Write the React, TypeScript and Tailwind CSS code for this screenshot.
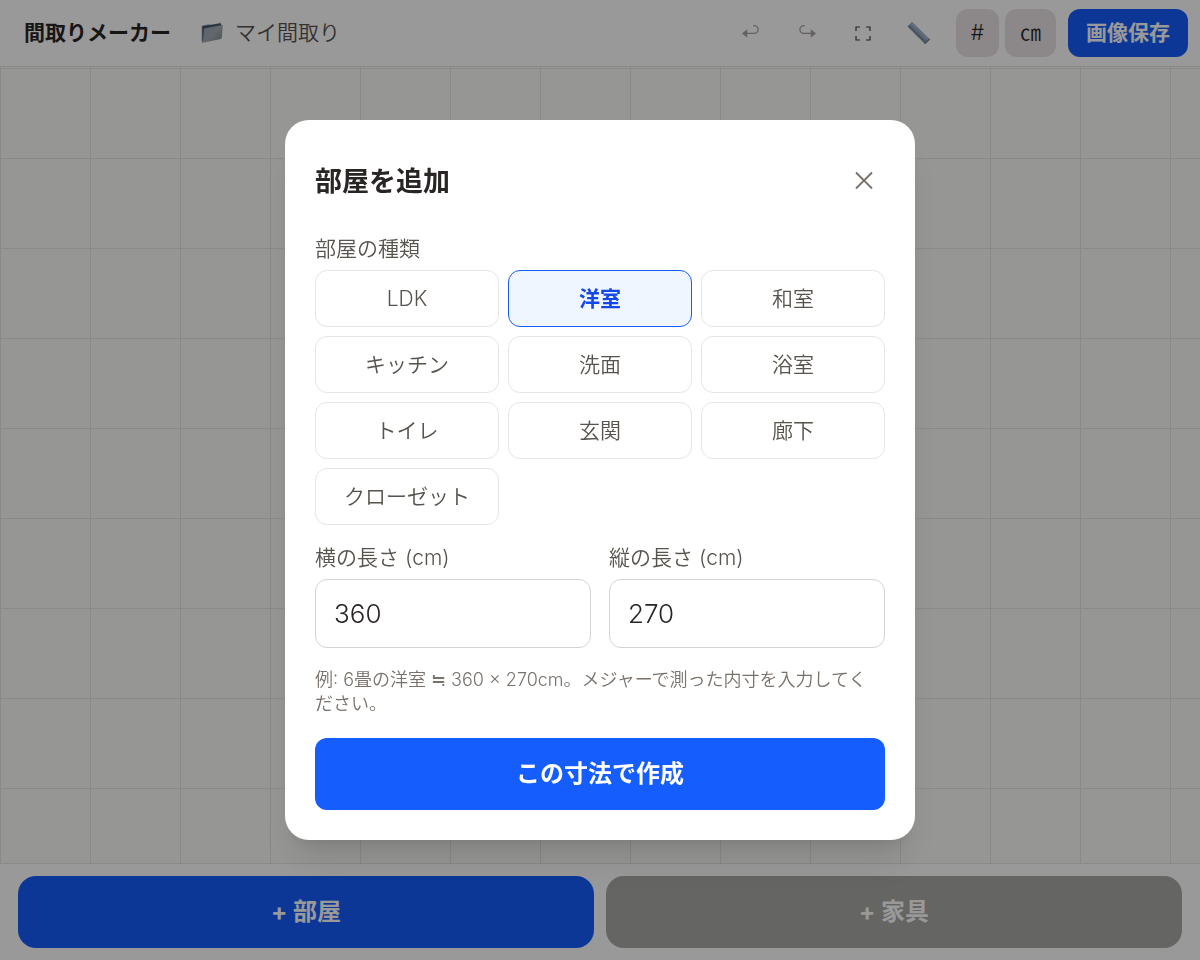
import { useState } from 'react';

const ROOM_TYPES = ['LDK', '洋室', '和室', 'キッチン', '洗面', '浴室', 'トイレ', '玄関', '廊下', 'クローゼット'];

function FolderIcon() {
  return (
    <svg viewBox="0 0 24 24" className="h-6 w-6 shrink-0" aria-hidden>
      <defs>
        <linearGradient id="folder-front" x1="0" y1="0" x2="1" y2="1">
          <stop offset="0" stopColor="#98a5b0" />
          <stop offset="0.5" stopColor="#a4adb6" />
          <stop offset="1" stopColor="#7d8994" />
        </linearGradient>
      </defs>
      <path d="M1.4 4.4 8.4 3l1.2.9L19.6 1.6l1 1.6-17.8 5z" fill="#a9c0d0" />
      <path d="M1.2 5 19.8 2.6l.6 2L3 20.5l-1.6-.4z" fill="#3f5666" />
      <path d="M3.8 7.2 20.9 4c.6-.1.9.2.9.8l-1 11.8c-.1.7-.4 1.1-1 1.3L3 21.4c-.7.1-1-.2-.9-.9l.8-12.2c0-.6.3-1 .9-1.1z" fill="url(#folder-front)" />
      <path d="M1.3 5v15.6c0 .6.4.9 1 .8" fill="none" stroke="#5c7282" strokeWidth="0.9" />
    </svg>
  );
}

function UndoIcon({ flipped = false }: { flipped?: boolean }) {
  return (
    <svg viewBox="0 0 20 20" className={`h-5 w-5 ${flipped ? '-scale-x-100' : ''}`} aria-hidden>
      <path d="M5 10.4h8.2a3.9 3.9 0 0 0 0-7.8h-1" fill="none" stroke="currentColor" strokeWidth="1.3" />
      <path d="M1 10.4 6.2 6.2v8.4z" fill="currentColor" />
    </svg>
  );
}

function FitIcon() {
  return (
    <svg viewBox="0 0 16 16" className="h-4 w-4" fill="none" stroke="currentColor" strokeWidth="1.2" aria-hidden>
      <path d="M1 6V2h4M11 2h4v4M15 11v4h-4M5 15H1v-4" />
    </svg>
  );
}

function RulerIcon() {
  return (
    <svg viewBox="0 0 24 24" className="h-6 w-6" aria-hidden>
      <path d="M.6 5.5 5 1l18 17.6-4.8 4.4z" fill="#93a8c0" />
      <path d="M.6 5.5 2.2 3.8l17.8 17.6-1.8 1.6z" fill="#7c90a6" />
      <path d="m2.6 5.2 16.6 16.4" fill="none" stroke="#64788f" strokeWidth="0.9" strokeDasharray="1 1" />
      <path d="M3.6 2.4 5 1l18 17.6-1.5 1.4z" fill="#a5b6c8" />
      <path d="M23 18.6 18.2 23l-1-1 4.8-4.4z" fill="#7186a0" />
    </svg>
  );
}

function CloseIcon() {
  return (
    <svg viewBox="0 0 18 18" className="h-[18px] w-[18px]" fill="none" stroke="currentColor" strokeWidth="1.9" aria-hidden>
      <path d="m1 1.5 16 16M17 1.5l-16 16" />
    </svg>
  );
}

interface LengthFieldProps {
  id: string;
  label: string;
  value: string;
  onChange: (value: string) => void;
}

function LengthField({ id, label, value, onChange }: LengthFieldProps) {
  return (
    <div className="min-w-0 flex-1">
      <label htmlFor={id} className="mb-1.5 block text-[21px] leading-[30px] text-stone-600">
        {label}
      </label>
      <input
        id={id}
        type="text"
        inputMode="numeric"
        value={value}
        onChange={(event) => onChange(event.target.value)}
        className="h-[69px] w-full rounded-xl border border-stone-300 bg-white px-[18px] text-[26px] text-stone-800 outline-none focus:border-blue-600"
      />
    </div>
  );
}

export default function App() {
  const [roomType, setRoomType] = useState('洋室');
  const [width, setWidth] = useState('360');
  const [height, setHeight] = useState('270');

  return (
    <div className="relative flex min-h-screen flex-col bg-white font-['Inter','Noto_Sans_CJK_JP',sans-serif] font-[350] text-stone-800">
      <header className="flex h-[67px] items-center border-b border-stone-200 bg-white pr-3 pl-6">
        <h1 className="text-[21px] font-bold">間取りメーカー</h1>
        <button type="button" className="ml-[30px] flex items-center gap-2.5 text-[21px] text-stone-600">
          <FolderIcon />
          マイ間取り
        </button>
        <div className="ml-auto flex items-center">
          <button type="button" disabled aria-label="元に戻す" className="flex h-12 w-14 items-center justify-center text-stone-400">
            <UndoIcon />
          </button>
          <button type="button" disabled aria-label="やり直す" className="flex h-12 w-14 items-center justify-center text-stone-400">
            <UndoIcon flipped />
          </button>
          <button type="button" aria-label="全体表示" className="flex h-12 w-14 items-center justify-center text-stone-700">
            <FitIcon />
          </button>
          <button type="button" aria-label="計測" className="flex h-12 w-14 items-center justify-center">
            <RulerIcon />
          </button>
          <button type="button" className="ml-[9px] h-12 w-[43px] rounded-xl bg-[#e9e3e5] text-[21px]">
            #
          </button>
          <button type="button" className="ml-1.5 h-12 w-[51px] rounded-xl bg-[#e9e3e5] text-[21px]">
            ㎝
          </button>
          <button type="button" className="ml-3 h-12 w-[120px] rounded-xl bg-blue-600 text-[21px] font-bold text-white">
            画像保存
          </button>
        </div>
      </header>

      <main className="flex-1 bg-[#fafaf7] bg-[linear-gradient(to_right,#e7e5df_1px,transparent_1px),linear-gradient(to_bottom,#e7e5df_1px,transparent_1px)] bg-size-[90px_90px] bg-position-[0_1px]" />

      <footer className="flex gap-3 border-t border-stone-200 bg-white px-[18px] py-3">
        <button type="button" className="h-[72px] flex-1 rounded-[18px] bg-blue-600 text-2xl font-bold text-white">
          + 部屋
        </button>
        <button type="button" className="h-[72px] flex-1 rounded-[18px] bg-[#a8a8a5] text-2xl font-bold text-white">
          + 家具
        </button>
      </footer>

      <div className="fixed inset-0 flex items-center justify-center bg-black/40 p-6">
        <section
          role="dialog"
          aria-modal="true"
          aria-labelledby="room-dialog-title"
          className="w-full max-w-[630px] rounded-3xl bg-white p-[30px] shadow-[0_30px_38px_-8px_rgba(0,0,0,0.1),0_12px_15px_-9px_rgba(0,0,0,0.1)]"
        >
          <div className="mb-5 flex h-16 items-center justify-between">
            <h2 id="room-dialog-title" className="text-[27px] font-bold">
              部屋を追加
            </h2>
            <button type="button" aria-label="閉じる" className="flex h-16 w-[42px] items-center justify-center pb-1 text-stone-500">
              <CloseIcon />
            </button>
          </div>

          <p id="room-type-label" className="mb-1.5 text-[21px] leading-[30px] text-stone-600">
            部屋の種類
          </p>
          <div role="group" aria-labelledby="room-type-label" className="mb-[18px] grid grid-cols-3 gap-[9px]">
            {ROOM_TYPES.map((type) => (
              <button
                key={type}
                type="button"
                aria-pressed={type === roomType}
                onClick={() => setRoomType(type)}
                className={`h-[57px] rounded-xl border text-[21px] ${
                  type === roomType
                    ? 'border-blue-600 bg-blue-50 font-bold text-blue-700'
                    : 'border-stone-200 bg-white text-stone-600'
                }`}
              >
                {type}
              </button>
            ))}
          </div>

          <div className="flex gap-[18px]">
            <LengthField id="room-width" label="横の長さ (cm)" value={width} onChange={setWidth} />
            <LengthField id="room-height" label="縦の長さ (cm)" value={height} onChange={setHeight} />
          </div>

          <p className="mt-5 pr-2 text-lg leading-6 text-stone-500">
            例: 6畳の洋室 ≒ 360 × 270cm。メジャーで測った内寸を入力してください。
          </p>

          <button type="button" className="mt-[22px] h-[72px] w-full rounded-xl bg-blue-600 text-2xl font-bold text-white">
            この寸法で作成
          </button>
        </section>
      </div>
    </div>
  );
}
